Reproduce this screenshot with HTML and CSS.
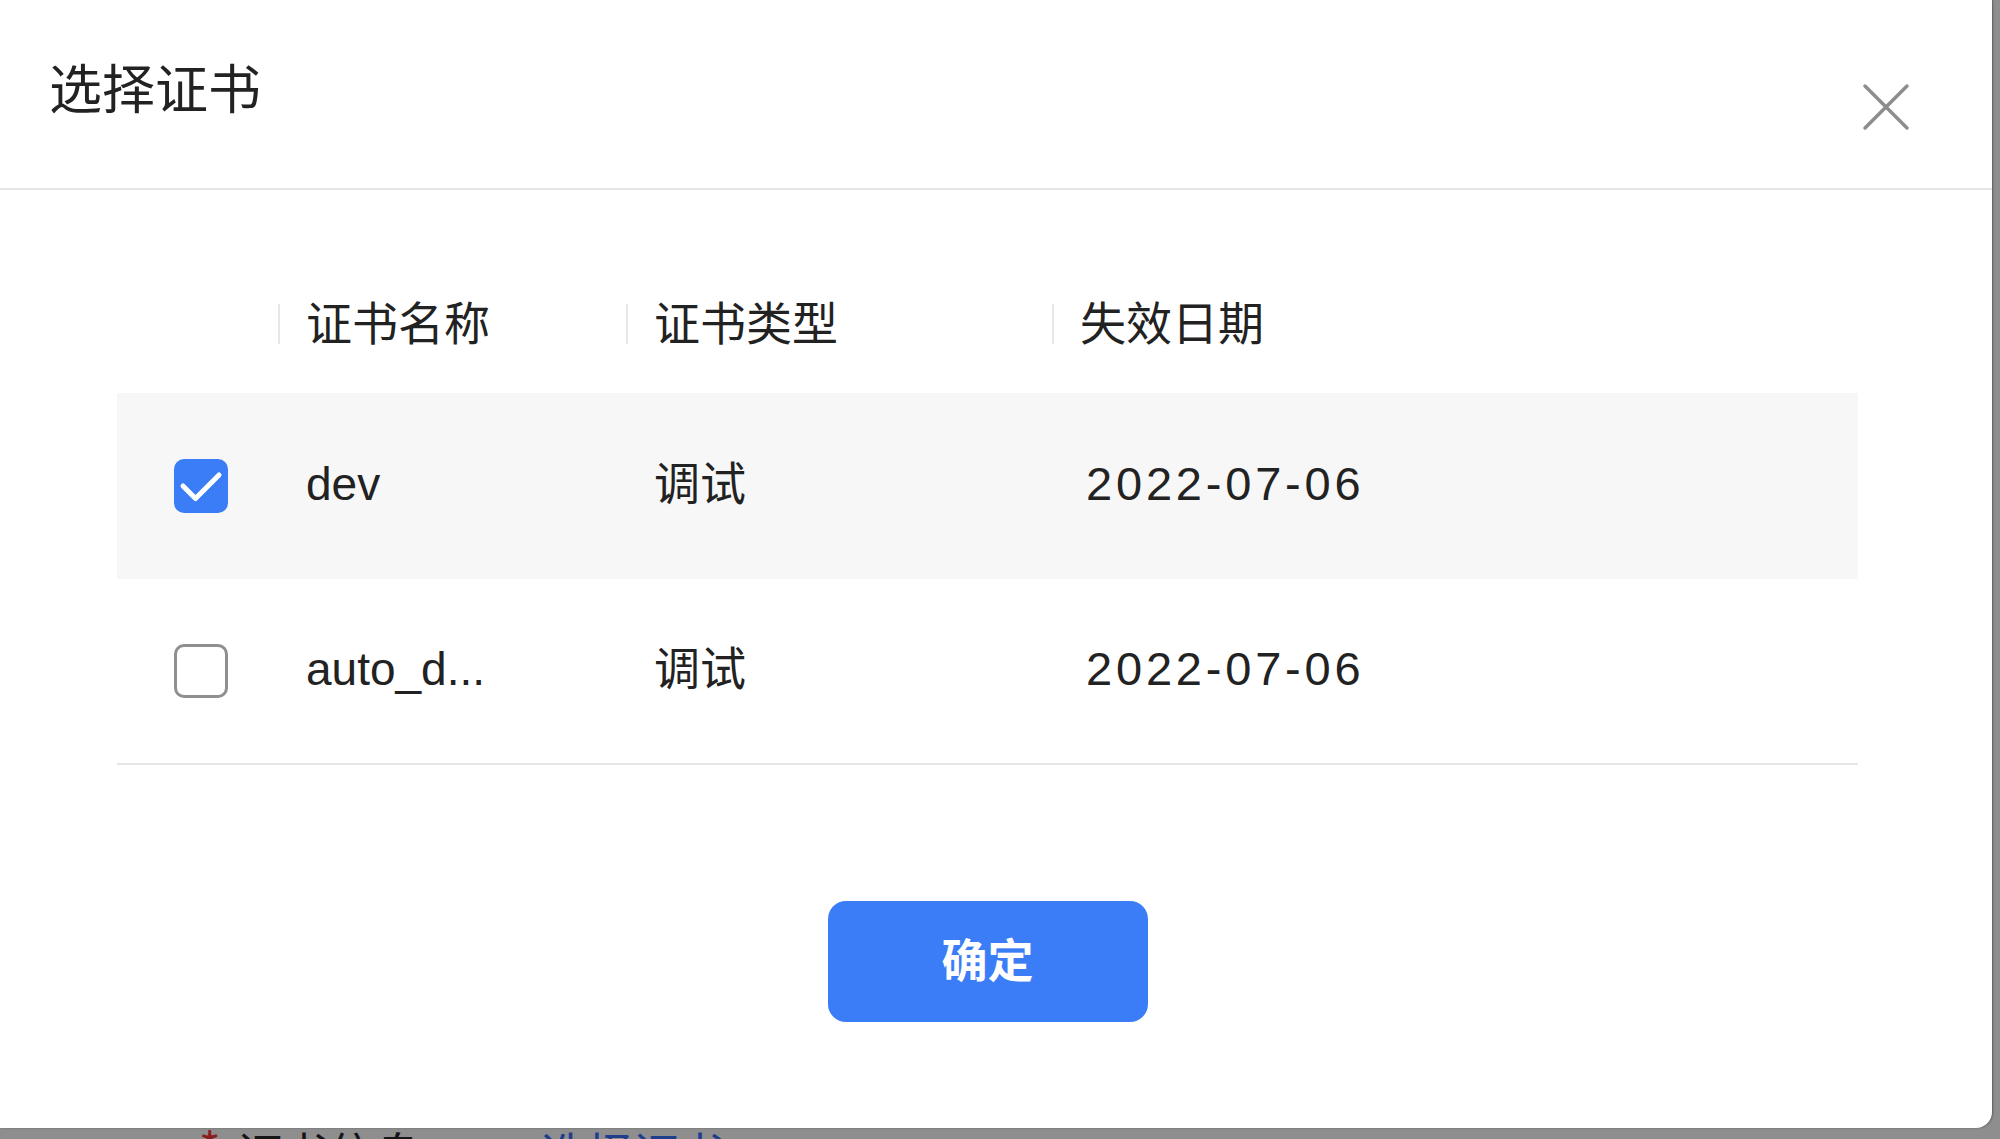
FILE: index.html
```html
<!DOCTYPE html>
<html lang="zh-CN">
<head>
<meta charset="utf-8">
<title>选择证书</title>
<link rel="stylesheet" href="styles.css">
</head>
<body>
<div class="modal">
  <div class="modal-header">
    <div class="modal-title">选择证书</div>
    <button class="close" aria-label="关闭">
      <svg viewBox="0 0 48 48" width="48" height="48"><path d="M3 3 L45 45 M45 3 L3 45" stroke="#8d8d8d" stroke-width="3.5" stroke-linecap="round" fill="none"/></svg>
    </button>
  </div>
  <div class="modal-body">
    <div class="grid head">
      <div class="cell"></div>
      <div class="cell th">证书名称</div>
      <div class="cell th">证书类型</div>
      <div class="cell th">失效日期</div>
    </div>
    <div class="grid row selected">
      <div class="cell check"><span class="checkbox checked"><svg viewBox="0 0 54 54" width="54" height="54"><path d="M9 27 L21.5 39.5 L45 16" stroke="#fff" stroke-width="5" fill="none" stroke-linecap="round" stroke-linejoin="round"/></svg></span></div>
      <div class="cell">dev</div>
      <div class="cell">调试</div>
      <div class="cell date">2022-07-06</div>
    </div>
    <div class="grid row last">
      <div class="cell check"><span class="checkbox"></span></div>
      <div class="cell">auto_d...</div>
      <div class="cell">调试</div>
      <div class="cell date">2022-07-06</div>
    </div>
    <div class="actions">
      <button class="btn-primary">确定</button>
    </div>
  </div>
</div>
<div class="under">
  <span class="req">*</span><span class="label">证书信息</span><span class="link">选择证书</span>
</div>
</body>
</html>
```
FILE: styles.css
```css
html, body {
  margin: 0;
  padding: 0;
}
body {
  width: 2000px;
  height: 1139px;
  overflow: hidden;
  background: #8e8e8e;
  font-family: "Liberation Sans", "Noto Sans CJK SC", sans-serif;
  color: #222;
}
.modal {
  width: 1992px;
  height: 1128px;
  background: #fff;
  border-bottom-right-radius: 16px;
  box-shadow: 1px 0 2px rgba(0,0,0,0.35);
  box-sizing: border-box;
}
.modal-header {
  height: 190px;
  box-sizing: border-box;
  border-bottom: 2px solid #e6e6e6;
  display: flex;
  justify-content: space-between;
  align-items: flex-start;
  padding: 64px 82px 0 49px;
}
.modal-title {
  font-size: 53px;
  line-height: 53px;
  color: #222;
}
.close {
  margin-top: 19px;
  width: 48px;
  height: 48px;
  padding: 0;
  border: 0;
  background: none;
  display: block;
}
.close svg { display: block; }
.modal-body {
  padding: 94px 134px 106px 117px;
}
.grid {
  display: grid;
  grid-template-columns: 161px 348px 426px 1fr;
  align-items: center;
}
.head {
  height: 80px;
  margin-bottom: 29px;
}
.cell {
  font-size: 46px;
  line-height: 46px;
  padding-left: 28px;
  white-space: nowrap;
}
.head .cell { padding-left: 0; }
.th {
  display: flex;
  align-items: center;
}
.th::before {
  content: "";
  width: 2px;
  height: 40px;
  background: #e8e8e8;
  margin-right: 26px;
  flex: none;
}
.row {
  height: 186px;
}
.row .cell {
  padding-bottom: 5px;
}
.row .cell.check {
  padding-bottom: 0;
}
.row.selected {
  background: #f7f7f7;
}
.row.last {
  box-sizing: border-box;
  border-bottom: 2px solid #e6e6e6;
}
.cell.check {
  padding-left: 57px;
  display: flex;
  align-items: center;
}
.checkbox {
  width: 54px;
  height: 54px;
  box-sizing: border-box;
  border: 3px solid #8f8f8f;
  border-radius: 10px;
  background: #fff;
  display: block;
}
.checkbox.checked {
  border: 0;
  background: #3b7df6;
}
.checkbox.checked svg { display: block; }
.date {
  font-size: 47px;
  letter-spacing: 3.8px;
  padding-left: 34px;
}
.actions {
  display: flex;
  justify-content: center;
  margin-top: 136px;
}
.btn-primary {
  width: 320px;
  height: 121px;
  border: 0;
  border-radius: 18px;
  background: #3b7df6;
  color: #fff;
  font-family: "Noto Sans CJK SC", sans-serif;
  font-weight: 700;
  font-size: 46px;
  padding: 0 0 9px 0;
}
.under {
  height: 11px;
  overflow: hidden;
  display: flex;
  align-items: flex-start;
  padding-left: 199px;
  font-size: 46px;
  line-height: 46px;
  font-family: "Noto Sans CJK SC", sans-serif;
}
.req {
  color: #8a1e1e;
  width: 38px;
  margin-top: -4px;
}
.label {
  color: #161616;
  width: 304px;
}
.link {
  color: #1f3f8c;
}
```
